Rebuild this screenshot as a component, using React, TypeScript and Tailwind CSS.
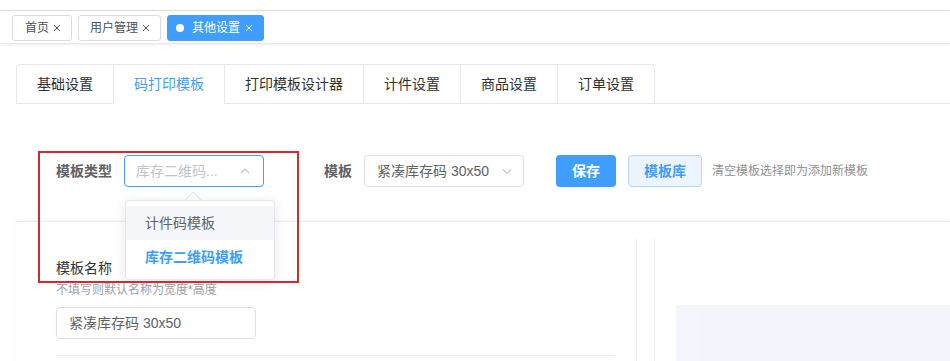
import React from "react";

const FONT = '"Liberation Sans", "Noto Sans CJK SC", sans-serif';

function Close({ className = "" }: { className?: string }) {
  return (
    <svg width="8" height="8" viewBox="0 0 8 8" className={className}>
      <path d="M1 1 L7 7 M7 1 L1 7" stroke="currentColor" strokeWidth="1" fill="none" />
    </svg>
  );
}

function Chevron({ up = false }: { up?: boolean }) {
  return (
    <svg width="12" height="12" viewBox="0 0 12 12" className="text-[#c0c4cc]">
      <path
        d={up ? "M2 8 L6 4 L10 8" : "M2 4.5 L6 8.5 L10 4.5"}
        stroke="currentColor"
        strokeWidth="1.1"
        fill="none"
      />
    </svg>
  );
}

const tabs = ["基础设置", "码打印模板", "打印模板设计器", "计件设置", "商品设置", "订单设置"];

export default function App() {
  return (
    <div
      className="relative w-[950px] h-[361px] overflow-hidden bg-white"
      style={{ fontFamily: FONT }}
    >
      {/* top strip */}
      <div className="h-[11px] border-b border-[#e4e4e4]" />
      {/* tags view */}
      <div className="relative z-10 h-[32px] flex items-center gap-[6px] pl-[12px] pt-[1px] bg-white shadow-[0_1px_3px_0_rgba(0,0,0,0.12),0_0_3px_0_rgba(0,0,0,0.04)]">
        <div className="h-[26px] flex items-center gap-[4px] border border-[#d8dce5] rounded-[3px] pl-[12px] pr-[10px] text-[12px] text-[#495060]">
          <span>首页</span>
          <Close />
        </div>
        <div className="h-[26px] flex items-center gap-[4px] border border-[#d8dce5] rounded-[3px] pl-[11px] pr-[10px] text-[12px] text-[#495060]">
          <span>用户管理</span>
          <Close />
        </div>
        <div className="h-[26px] flex items-center border border-[#409eff] bg-[#409eff] rounded-[3px] pl-[8px] pr-[10px] text-[12px] text-white">
          <span className="w-[8px] h-[8px] rounded-full bg-white mr-[8px]" />
          <span>其他设置</span>
          <Close className="ml-[5px]" />
        </div>
      </div>

      {/* content */}
      <div className="pl-[16px] pt-[21px]">
        {/* tabs header */}
        <div className="flex h-[40px]">
          <div className="flex border-t border-l border-r border-[#e4e7ed] rounded-t-[4px]">
            {tabs.map((t, i) => (
              <div
                key={t}
                className={
                  "h-[39px] flex items-center px-[20px] text-[14px] " +
                  (i > 0 ? "border-l border-[#e4e7ed] " : "") +
                  (i === 1
                    ? "border-b border-b-white text-[#409eff]"
                    : "border-b border-b-[#e4e7ed] text-[#303133]")
                }
              >
                {t}
              </div>
            ))}
          </div>
          <div className="flex-1 border-b border-[#e4e7ed]" />
        </div>

        {/* form row */}
        <div className="mt-[51px] h-[32px] flex items-center pl-[40px]">
          <span className="text-[14px] font-semibold text-[#606266] mr-[12px]">模板类型</span>
          <div className="w-[140px] h-[32px] flex items-center justify-between border border-[#409eff] rounded-[4px] pl-[11px] pr-[12px] text-[14px] text-[#c0c4cc]">
            <span>库存二维码...</span>
            <Chevron up />
          </div>
          <span className="ml-[60px] text-[14px] font-semibold text-[#606266] mr-[12px]">模板</span>
          <div className="w-[160px] h-[32px] flex items-center justify-between border border-[#dcdfe6] rounded-[4px] pl-[12px] pr-[10px] text-[14px] text-[#606266]">
            <span>紧凑库存码 30x50</span>
            <Chevron />
          </div>
          <button className="ml-[32px] w-[60px] h-[32px] rounded-[4px] bg-[#409eff] text-white text-[14px] font-semibold">
            保存
          </button>
          <button className="ml-[12px] w-[74px] h-[32px] rounded-[4px] bg-[#ecf5ff] border border-[#b3d8ff] text-[#409eff] text-[14px] font-semibold">
            模板库
          </button>
          <span className="ml-[10px] text-[12px] text-[#909399]">清空模板选择即为添加新模板</span>
        </div>

        {/* lower card */}
        <div className="mt-[34px] border-t border-[#ebeef5] shadow-[0_-1px_3px_0_rgba(0,0,0,0.04)] flex h-[200px]">
          <div className="w-[621px] pt-[16px]">
            <div className="h-full border-r border-[#ebeef5] pl-[40px] pr-[22px] pt-[20px]">
              <div className="text-[14px] text-[#303133] leading-[20px]">模板名称</div>
              <div className="text-[12px] text-[#a0a3a8] leading-[16px] mt-[4px]">不填写则默认名称为宽度*高度</div>
              <div className="mt-[9px] w-[200px] h-[32px] flex items-center border border-[#dcdfe6] rounded-[4px] px-[12px] text-[14px] text-[#606266]">
                紧凑库存码 30x50
              </div>
              <div className="mt-[16px] border-t border-[#ebeef5]" />
            </div>
          </div>
          <div className="ml-[17px] flex-1 pt-[16px]">
            <div className="h-full border-l border-[#ebeef5] pl-[21px] pt-[67px]">
              <div className="h-full bg-[#f4f6fb] pl-[22px] pt-[7px]">
                <div className="h-full bg-[#f3f5fc]" />
              </div>
            </div>
          </div>
        </div>
      </div>

      {/* dropdown */}
      <div className="absolute left-[125px] top-[200px] w-[150px] z-20">
        <div className="absolute left-[62px] top-[-6px] w-[12px] h-[12px] rotate-45 bg-white border-l border-t border-[#e4e7ed]" />
        <div className="relative bg-white border border-[#e4e7ed] rounded-[4px] shadow-[0_2px_12px_0_rgba(0,0,0,0.1)] py-[5px]">
          <div className="h-[34px] flex items-center pl-[19px] bg-[#f5f7fa] text-[14px] text-[#606266]">计件码模板</div>
          <div className="h-[34px] flex items-center pl-[19px] text-[14px] text-[#409eff] font-bold">库存二维码模板</div>
        </div>
      </div>

      {/* red annotation box */}
      <div className="absolute left-[38px] top-[151px] w-[261px] h-[132px] border-2 border-[#d42a2f] z-30 pointer-events-none" />
    </div>
  );
}
